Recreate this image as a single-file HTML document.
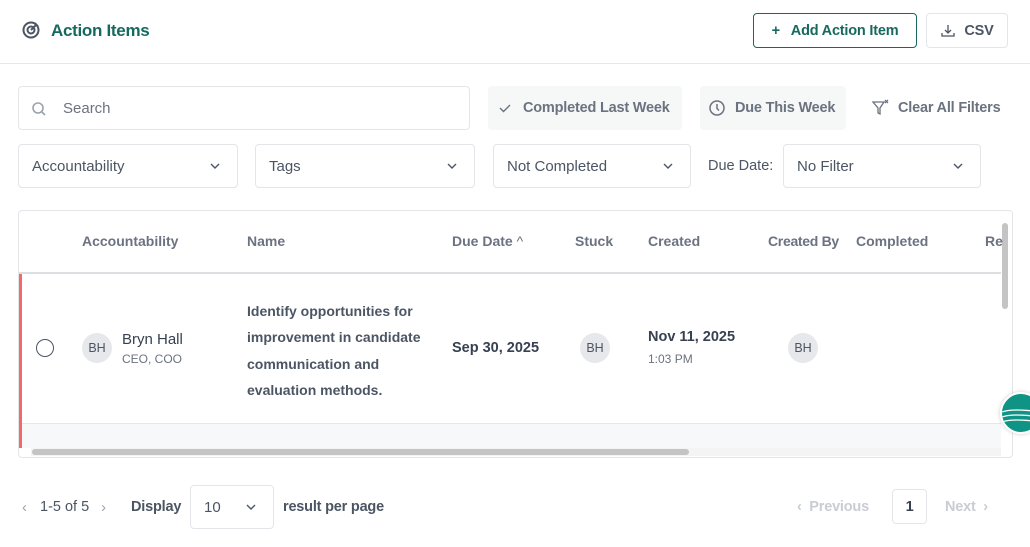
<!DOCTYPE html>
<html><head><style>
*{box-sizing:border-box;margin:0;padding:0}
body{width:1030px;height:547px;overflow:hidden;background:#fff;font-family:"Liberation Sans",sans-serif;color:#4b5563;position:relative}
.a{position:absolute}
.box{position:absolute;border:1px solid #e3e5e8;border-radius:4px;background:#fff}
.sel{font-size:15px;color:#4b5563;display:flex;align-items:center;padding-left:13px}
.chev{position:absolute;right:16px;top:50%;margin-top:-4px}
.hd{position:absolute;top:233px;font-size:14px;font-weight:bold;color:#6b7280}
.av{position:absolute;width:30px;height:30px;border-radius:50%;background:#e7e8ec;font-size:12.5px;color:#4b5563;display:flex;align-items:center;justify-content:center}
.bt{font-size:14.5px;font-weight:bold;letter-spacing:-0.2px}
</style></head><body>
<svg class="a" style="left:21px;top:20px" width="20" height="20" viewBox="0 0 20 20" fill="none" stroke="#4b5563" stroke-width="2"><circle cx="10" cy="10" r="7.5"/><circle cx="10" cy="10" r="3.5"/><path d="M10 10l6-6M14 3l1 2 2 1"/></svg>
<div class="a" style="left:51px;top:21px;font-size:17px;font-weight:bold;color:#17695f;letter-spacing:-0.3px">Action Items</div>
<div class="box bt" style="left:753px;top:13px;width:164px;height:35px;border-color:#17695f;color:#17695f;display:flex;align-items:center;justify-content:center">+&nbsp;&nbsp; Add Action Item</div>
<div class="box bt" style="left:926px;top:13px;width:82px;height:35px;display:flex;align-items:center;justify-content:center">
<svg width="16" height="16" viewBox="0 0 16 16" fill="none" stroke="#4b5563" stroke-width="1.3" style="margin-right:8px"><path d="M8 2v8M5 7l3 3 3-3M2 10v3h12v-3"/></svg>CSV</div>
<div class="a" style="left:0;top:63px;width:1030px;height:1px;background:#e5e7eb"></div>

<div class="box sel" style="left:18px;top:86px;width:452px;height:44px;color:#6b7280;padding-left:44px">Search</div>
<svg class="a" style="left:31px;top:101px" width="16" height="16" viewBox="0 0 16 16" fill="none" stroke="#9ca3af" stroke-width="1.6"><circle cx="7" cy="7" r="5"/><path d="M11 11l3 3"/></svg>
<div class="a bt" style="left:488px;top:86px;width:194px;height:44px;background:#f6f7f7;border-radius:4px;color:#6b7280;display:flex;align-items:center;padding-left:35px">Completed Last Week</div>
<svg class="a" style="left:498px;top:101px" width="14" height="14" viewBox="0 0 14 14" fill="none" stroke="#6b7280" stroke-width="1.4"><path d="M2 7l3.5 3.5L12 4"/></svg>
<div class="a bt" style="left:700px;top:86px;width:146px;height:44px;background:#f6f7f7;border-radius:4px;color:#6b7280;display:flex;align-items:center;padding-left:35px">Due This Week</div>
<svg class="a" style="left:708px;top:99px" width="18" height="18" viewBox="0 0 18 18" fill="none" stroke="#6b7280" stroke-width="1.5"><circle cx="9" cy="9" r="7"/><path d="M9 5v4.5l2 2"/></svg>
<svg class="a" style="left:872px;top:99px" width="18" height="18" viewBox="0 0 18 18" fill="none" stroke="#6b7280" stroke-width="1.3"><path d="M1 3h11l-4 6v6l-2-1V9z M13 1l3 3M16 1l-3 3"/></svg>
<div class="a bt" style="left:898px;top:100px;color:#6b7280">Clear All Filters</div>

<div class="box sel" style="left:18px;top:144px;width:220px;height:44px">Accountability<svg class="chev" width="12" height="8" viewBox="0 0 12 8" fill="none" stroke="#4b5563" stroke-width="1.4"><path d="M2 2l4 4 4-4"/></svg></div>
<div class="box sel" style="left:255px;top:144px;width:220px;height:44px">Tags<svg class="chev" width="12" height="8" viewBox="0 0 12 8" fill="none" stroke="#4b5563" stroke-width="1.4"><path d="M2 2l4 4 4-4"/></svg></div>
<div class="box sel" style="left:493px;top:144px;width:198px;height:44px">Not Completed<svg class="chev" width="12" height="8" viewBox="0 0 12 8" fill="none" stroke="#4b5563" stroke-width="1.4"><path d="M2 2l4 4 4-4"/></svg></div>
<div class="a" style="left:708px;top:158px;font-size:14.5px">Due Date:</div>
<div class="box sel" style="left:783px;top:144px;width:198px;height:44px">No Filter<svg class="chev" width="12" height="8" viewBox="0 0 12 8" fill="none" stroke="#4b5563" stroke-width="1.4"><path d="M2 2l4 4 4-4"/></svg></div>

<div class="box" style="left:18px;top:210px;width:995px;height:248px;overflow:hidden">
<div class="a" style="left:0;top:61px;width:982px;height:2px;background:#dcdee2"></div>
<div class="a" style="left:0;top:63px;width:3px;height:174px;background:#f06a6a"></div>
<div class="a" style="left:3px;top:212px;width:979px;height:1px;background:#e5e7eb"></div>
<div class="a" style="left:3px;top:213px;width:979px;height:24px;background:#f7f8f9"></div>
<div class="a" style="left:12px;top:237px;width:970px;height:8px;background:#f4f4f4"></div>
<div class="a" style="left:13px;top:238px;width:657px;height:6px;background:#c4c4c4;border-radius:3px"></div>
<div class="a" style="left:983px;top:12px;width:6px;height:86px;background:#c4c4c4;border-radius:3px"></div>
</div>
<div class="hd" style="left:82px">Accountability</div>
<div class="hd" style="left:247px">Name</div>
<div class="hd" style="left:452px">Due Date <span style="font-weight:normal">^</span></div>
<div class="hd" style="left:575px">Stuck</div>
<div class="hd" style="left:648px">Created</div>
<div class="hd" style="left:768px;letter-spacing:-0.3px">Created By</div>
<div class="hd" style="left:856px">Completed</div>
<div class="hd" style="left:985px">Re</div>

<div class="a" style="left:36px;top:339px;width:18px;height:18px;border:1.5px solid #4b5563;border-radius:50%"></div>
<div class="av" style="left:82px;top:333px">BH</div>
<div class="a" style="left:122px;top:331px;font-size:15px;color:#374151">Bryn Hall</div>
<div class="a" style="left:122px;top:352px;font-size:12px;color:#6b7280">CEO, COO</div>
<div class="a" style="left:247px;top:298px;font-size:14px;font-weight:bold;line-height:26.3px;width:200px;color:#4b5563">Identify opportunities for improvement in candidate communication and evaluation methods.</div>
<div class="a" style="left:452px;top:340px;font-size:14.5px;font-weight:bold;color:#374151">Sep 30, 2025</div>
<div class="av" style="left:580px;top:333px">BH</div>
<div class="a" style="left:648px;top:329px;font-size:14.5px;font-weight:bold;color:#374151">Nov 11, 2025</div>
<div class="a" style="left:648px;top:352px;font-size:12px;color:#6b7280">1:03 PM</div>
<div class="av" style="left:788px;top:333px">BH</div>
<div class="a" style="left:1000px;top:392px;width:42px;height:42px;border-radius:50%;background:#0e9384;border:2px solid #fff;box-shadow:0 0 4px rgba(0,0,0,.2);overflow:hidden">
<svg width="42" height="42"><path d="M0 18q10-4 40 0M0 23q10-4 40 0M0 28q10-4 40 0" stroke="#fff" fill="none" stroke-width="1.2"/></svg></div>

<div class="a" style="left:22px;top:499px;font-size:15px;color:#9ca3af">‹</div>
<div class="a" style="left:40px;top:499px;font-size:14.5px">1-5 of 5</div>
<div class="a" style="left:101px;top:499px;font-size:15px;color:#9ca3af">›</div>
<div class="a bt" style="left:131px;top:499px">Display</div>
<div class="box sel" style="left:190px;top:485px;width:84px;height:44px">10<svg class="chev" width="12" height="8" viewBox="0 0 12 8" fill="none" stroke="#4b5563" stroke-width="1.4"><path d="M2 2l4 4 4-4"/></svg></div>
<div class="a bt" style="left:283px;top:499px">result per page</div>
<div class="a bt" style="left:797px;top:499px;color:#c9cdd3">‹ &nbsp;Previous</div>
<div class="box bt" style="left:892px;top:489px;width:35px;height:35px;color:#374151;display:flex;align-items:center;justify-content:center">1</div>
<div class="a bt" style="left:945px;top:499px;color:#c9cdd3">Next &nbsp;›</div>
</body></html>
